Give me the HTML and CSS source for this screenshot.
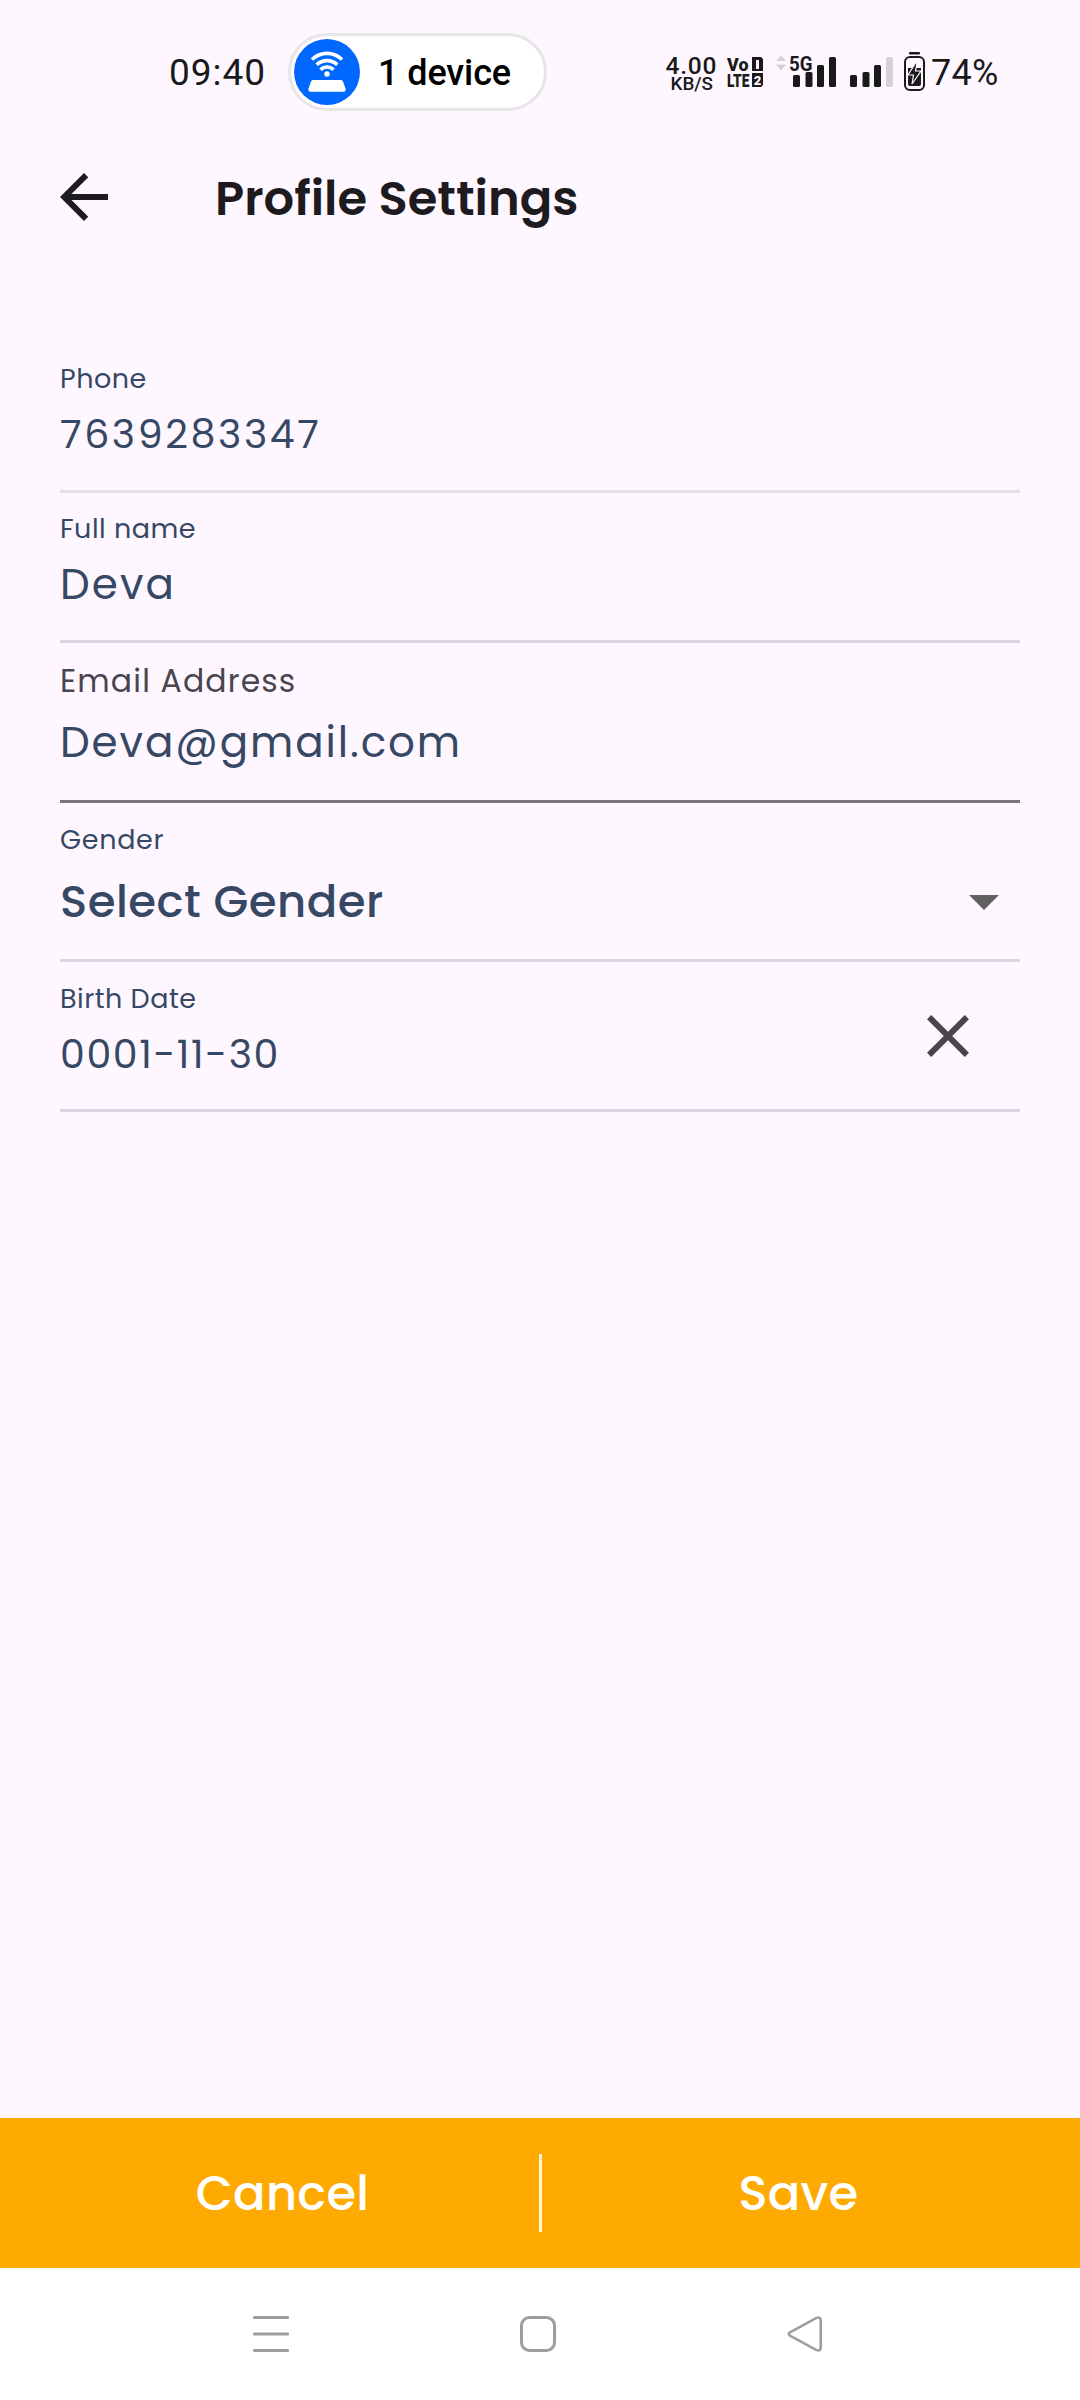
FILE: index.html
```html
<!DOCTYPE html>
<html lang="en">
<head>
<meta charset="utf-8">
<title>Profile Settings</title>
<link rel="stylesheet" href="styles.css">
</head>
<body>
<div class="screen">
  <div class="status">
    <span class="time">09:40</span>
    <div class="pill">
      <svg class="pill-icon" width="66" height="66" viewBox="0 0 66 66">
        <circle cx="33" cy="33" r="33" fill="#0068ff"/>
        <g fill="none" stroke="#fff" stroke-width="3.6">
          <path d="M18 20.5a21.5 21.5 0 0 1 30 0"/>
          <path d="M22.700 25.7a15 15 0 0 1 20.600 0"/>
          <path d="M26.500 30.600a9.500 9.500 0 0 1 13 0"/>
        </g>
        <circle cx="33" cy="35" r="2.700" fill="#fff"/>
        <path d="M19 41H47Q48.500 41 49 42.500L51.500 49.500Q52 52.700 49.500 52.700H16.500Q14 52.700 14.500 49.500L17 42.500Q17.500 41 19 41z" fill="#fff"/>
      </svg>
      <span class="pill-text">1 device</span>
    </div>
    <svg class="indicators" width="264" height="46" viewBox="664 49 264 46" fill="#1a1a1a">
      <g font-family="Roboto, sans-serif" font-weight="500">
        <text x="665.500" y="73.500" font-size="24.500" textLength="51">4.00</text>
        <text x="670.500" y="90" font-size="17.500" textLength="42.500" lengthAdjust="spacingAndGlyphs">KB/S</text>
      </g>
      <g font-family="Roboto, sans-serif" font-weight="900">
        <text x="727" y="71" font-size="18.500" textLength="21.500" lengthAdjust="spacingAndGlyphs">Vo</text>
        <text x="727" y="87" font-size="18.500" textLength="22.500" lengthAdjust="spacingAndGlyphs">LTE</text>
        <path d="M752 57h9l2 2v12h-11zM752 73h11v12l-2 2h-9z"/>
        <path d="M756 60h3v9h-3z" fill="#fef7ff"/>
        <text x="753.800" y="85" font-size="13" fill="#fef7ff">2</text>
      </g>
      <path d="M776 61l5-5.500 5 5.500zM776 64.500h10l-5 6z" fill="#d6d0d7"/>
      <rect x="793" y="75" width="7" height="12" rx="1.500"/>
      <rect x="805.500" y="72" width="7" height="15" rx="1.500"/>
      <rect x="817" y="65" width="7" height="22" rx="1.500"/>
      <rect x="829" y="57" width="7" height="30" rx="1.500"/>
      <text x="789" y="70.500" font-family="Roboto, sans-serif" font-weight="700" font-size="20.500" textLength="23.500" lengthAdjust="spacingAndGlyphs">5G</text>
      <rect x="850" y="75" width="7" height="12" rx="1.500"/>
      <rect x="862.500" y="72" width="7" height="15" rx="1.500"/>
      <rect x="874" y="65" width="7" height="22" rx="1.500"/>
      <rect x="886" y="57" width="7" height="30" rx="1.500" fill="#d6d0d7"/>
      <rect x="909" y="52" width="11" height="2.500" rx="1"/>
      <rect x="905" y="57" width="19" height="33" rx="5" fill="none" stroke="#1a1a1a" stroke-width="2"/>
      <path d="M908 68h13v16q0 2-2 2h-9q-2 0-2-2z"/>
      <path d="M915.500 63l-7.500 12h5.500l-1.500 9 9-13h-5.500l1.500-8z" stroke="#fef7ff" stroke-width="1.200"/>
    </svg>
    <span class="percent">74%</span>
  </div>

  <header class="appbar">
    <svg class="back" width="72" height="72" viewBox="0 0 24 24"><path fill="#1d1b20" d="M20 11H7.830l5.590-5.590L12 4l-8 8 8 8 1.410-1.410L7.830 13H20z"/></svg>
    <h1 class="title">Profile Settings</h1>
  </header>

  <main class="form">
    <div class="field faint">
      <div class="label">Phone</div>
      <div class="value number">7639283347</div>
    </div>
    <div class="field">
      <div class="label">Full name</div>
      <div class="value">Deva</div>
    </div>
    <div class="field email">
      <div class="label">Email Address</div>
      <div class="value">Deva@gmail.com</div>
    </div>
    <div class="field gender">
      <div class="label">Gender</div>
      <div class="value">
        <span>Select Gender</span>
        <svg class="caret" width="30" height="15" viewBox="0 0 30 15"><path d="M0 0h30L15 15z" fill="#616161"/></svg>
      </div>
    </div>
    <div class="field birth">
      <div>
        <div class="label">Birth Date</div>
        <div class="value date">0001-11-30</div>
      </div>
      <svg class="clear" width="72" height="72" viewBox="0 0 24 24"><path fill="#49454f" d="M19 6.410L17.590 5 12 10.590 6.410 5 5 6.410 10.590 12 5 17.590 6.410 19 12 13.410 17.590 19 19 17.590 13.410 12z"/></svg>
    </div>
  </main>

  <div class="actions">
    <div class="action cancel">Cancel</div>
    <div class="divider"></div>
    <div class="action save">Save</div>
  </div>

  <nav class="navbar">
    <svg width="36" height="36" viewBox="0 0 36 36" fill="#9e9e9e"><rect width="36" height="3" rx="1"/><rect y="16.500" width="36" height="3" rx="1"/><rect y="33" width="36" height="3" rx="1"/></svg>
    <svg width="36" height="36" viewBox="0 0 36 36" fill="none" stroke="#9e9e9e" stroke-width="3"><rect x="1.500" y="1.500" width="33" height="33" rx="8"/></svg>
    <svg width="36" height="36" viewBox="0 0 36 36" fill="none" stroke="#9e9e9e" stroke-width="2.600"><path d="M3 16.300L29.500 1.900Q33.700.4 33.700 4.500V31.500Q33.700 35.600 29.500 34.100L3 19.700Q.5 18 3 16.300z"/></svg>
  </nav>
</div>
</body>
</html>
```
FILE: styles.css
```css
* { box-sizing: border-box; }
body { margin: 0; background: #fef7ff; font-family: Poppins, Inter, sans-serif; }
svg { display: block; flex: none; }
.screen { width: 1080px; height: 2400px; display: flex; flex-direction: column; overflow: hidden; }

.status { height: 144px; padding: 0 80px 0 169px; display: flex; align-items: center; font-family: Roboto, sans-serif; color: #1a1a1a; }
.time { width: 119px; padding-top: 2px; font-size: 37px; line-height: 44px; letter-spacing: 1px; }
.pill { width: 259px; height: 78px; border: 3px solid #e6e6e6; border-radius: 39px; background: #fff; display: flex; align-items: center; padding-left: 3px; }
.pill-text { margin-left: 18px; padding-top: 1px; font-size: 36px; font-weight: 500; color: #000; letter-spacing: -0.1px; }
.indicators { margin-left: 117px; }
.percent { margin-left: 3px; padding-top: 2px; font-size: 36px; letter-spacing: 0.3px; }

.appbar { height: 106px; padding: 0 48px; display: flex; align-items: center; }
.title { margin: 4px 0 0 95px; font-size: 48px; line-height: 60px; font-weight: 600; color: #1d1b20; }

.form { flex: 1; padding: 93px 60px 0; }
.field { height: 150px; padding-top: 18px; border-bottom: 3px solid #d6d5e1; color: #374865; }
.faint { border-color: #e4dee6; }
.label { font-size: 27px; line-height: 36px; letter-spacing: 0.5px; margin-bottom: 13px; white-space: nowrap; }
.value { font-size: 42px; line-height: 50px; letter-spacing: 2.1px; white-space: nowrap; }
.number { font-size: 39.5px; letter-spacing: 2.6px; }
.date { font-size: 39.5px; letter-spacing: 1.6px; }
.email { height: 160px; border-color: #79767d; }
.email .label { font-size: 31.5px; line-height: 40px; letter-spacing: 1.125px; margin-bottom: 17px; color: #49454f; }
.email .value { letter-spacing: 1.9px; }
.gender { height: 159px; padding-top: 19px; }
.gender .label { margin-bottom: 19px; letter-spacing: 0.7px; }
.gender .value { display: flex; justify-content: space-between; align-items: center; padding-right: 21px; font-size: 45px; font-weight: 500; letter-spacing: 0.5px; }
.caret { margin-top: 1px; }
.birth { display: flex; justify-content: space-between; padding: 19px 36px 0 0; }
.clear { margin-top: 19px; }

.actions { height: 150px; background: #fa0; display: flex; align-items: center; color: #fff; font-size: 48px; line-height: 60px; font-weight: 500; letter-spacing: 0.3px; }
.action { flex: 1; display: flex; justify-content: center; padding-top: 2px; }
.cancel { padding-left: 26px; }
.save { padding-right: 25px; }
.divider { width: 3px; height: 78px; background: #fff3dc; }
.navbar { height: 132px; padding: 0 257px 0 253px; background: #fff; display: flex; align-items: center; justify-content: space-between; }
```
